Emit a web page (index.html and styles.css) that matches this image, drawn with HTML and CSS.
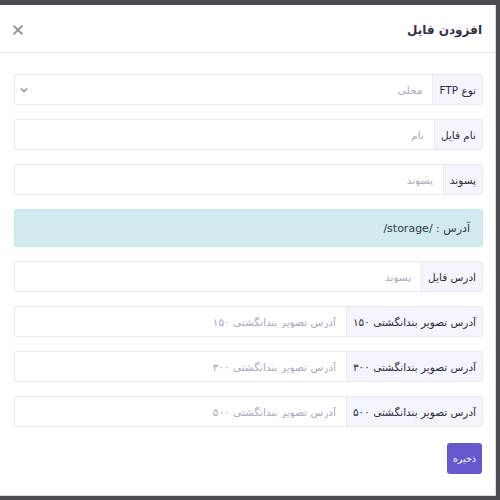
FILE: index.html
```html
<!DOCTYPE html>
<html lang="fa">
<head>
<meta charset="utf-8">
<title>افزودن فایل</title>
<link rel="stylesheet" href="styles.css">
</head>
<body>
<div class="modal" dir="rtl">
  <div class="modal-header">
    <h5 class="modal-title">افزودن فایل</h5>
    <svg class="close" width="10" height="10" viewBox="0 0 10 10"><path d="M1.2 1.2 L8.8 8.8 M8.8 1.2 L1.2 8.8" stroke="#9a9aa5" stroke-width="2" stroke-linecap="round"/></svg>
  </div>
  <div class="modal-body">
    <div class="input-group">
      <span class="group-label">نوع FTP</span>
      <div class="control select-control">
        <span class="select-value">محلی</span>
        <svg class="chevron" width="8" height="6" viewBox="0 0 8 6"><path d="M1 1.5 L4 4.5 L7 1.5" fill="none" stroke="#8b8db3" stroke-width="1.4"/></svg>
      </div>
    </div>
    <div class="input-group">
      <span class="group-label">نام فایل</span>
      <input class="control" type="text" placeholder="نام">
    </div>
    <div class="input-group">
      <span class="group-label">پسوند</span>
      <input class="control" type="text" placeholder="پسوند">
    </div>
    <div class="alert">آدرس : /storage/</div>
    <div class="input-group">
      <span class="group-label">ادرس فایل</span>
      <input class="control" type="text" placeholder="پسوند">
    </div>
    <div class="input-group">
      <span class="group-label">آدرس تصویر بندانگشتی ۱۵۰</span>
      <input class="control" type="text" placeholder="آدرس تصویر بندانگشتی ۱۵۰">
    </div>
    <div class="input-group">
      <span class="group-label">آدرس تصویر بندانگشتی ۳۰۰</span>
      <input class="control" type="text" placeholder="آدرس تصویر بندانگشتی ۳۰۰">
    </div>
    <div class="input-group">
      <span class="group-label">آدرس تصویر بندانگشتی ۵۰۰</span>
      <input class="control" type="text" placeholder="آدرس تصویر بندانگشتی ۵۰۰">
    </div>
    <div class="actions">
      <button class="btn-save" type="button">ذخیره</button>
    </div>
  </div>
</div>
</body>
</html>
```

FILE: styles.css
```css
* { box-sizing: border-box; }
html, body {
  margin: 0;
  padding: 0;
  background: #4a4b51;
  height: 500px;
  overflow: hidden;
}
body {
  font-family: "DejaVu Sans", "Noto Sans", sans-serif;
  padding-top: 5px;
}
.modal {
  width: 496px;
  height: 491px;
  background: #ffffff;
  border-right: 1px solid #d9d9e0;
  border-bottom: 1px solid #d9d9e0;
  display: flex;
  flex-direction: column;
}
.modal-header {
  height: 48px;
  border-bottom: 1px solid #e9e9f4;
  display: flex;
  align-items: center;
  justify-content: space-between;
  padding: 2px 13px 0 13px;
}
.modal-title {
  margin: 0;
  font-size: 12px;
  font-weight: bold;
  color: #2f3045;
}
.close { display: block; }
.modal-body {
  padding: 21px 12px 0 14px;
  display: flex;
  flex-direction: column;
  gap: 14px;
}
.input-group {
  display: flex;
  height: 31px;
}
.group-label {
  display: flex;
  align-items: center;
  padding: 0 6px;
  background: #f4f5fc;
  border: 1px solid #e9e9f4;
  border-radius: 0 3px 3px 0;
  font-size: 10.5px;
  color: #2b2c3c;
  white-space: nowrap;
}
.control {
  flex: 1;
  min-width: 0;
  height: 31px;
  border: 1px solid #e9e9f4;
  border-right: none;
  border-radius: 3px 0 0 3px;
  padding: 0 10px;
  font-family: inherit;
  font-size: 10.5px;
  color: #a3a3b5;
  background: #ffffff;
  outline: none;
  direction: rtl;
}
.control::placeholder { color: #a9a9ba; }
.select-control {
  display: flex;
  align-items: center;
  justify-content: space-between;
  padding: 0 10px 0 5px;
}
.select-value { color: #a9a9ba; }
.chevron { display: block; }
.alert {
  height: 38px;
  background: #d0eaef;
  border: 1px solid #c6e5eb;
  border-radius: 2px;
  display: flex;
  align-items: center;
  padding: 0 12px;
  font-size: 11px;
  color: #2f3a40;
}
.actions {
  display: flex;
  margin-top: 2px;
}
.btn-save {
  width: 35px;
  height: 31px;
  background: #6658cf;
  border: none;
  border-radius: 3px;
  color: #ffffff;
  font-family: inherit;
  font-size: 9.5px;
  font-weight: normal;
  padding: 0;
  margin-right: 1px;
}
```
